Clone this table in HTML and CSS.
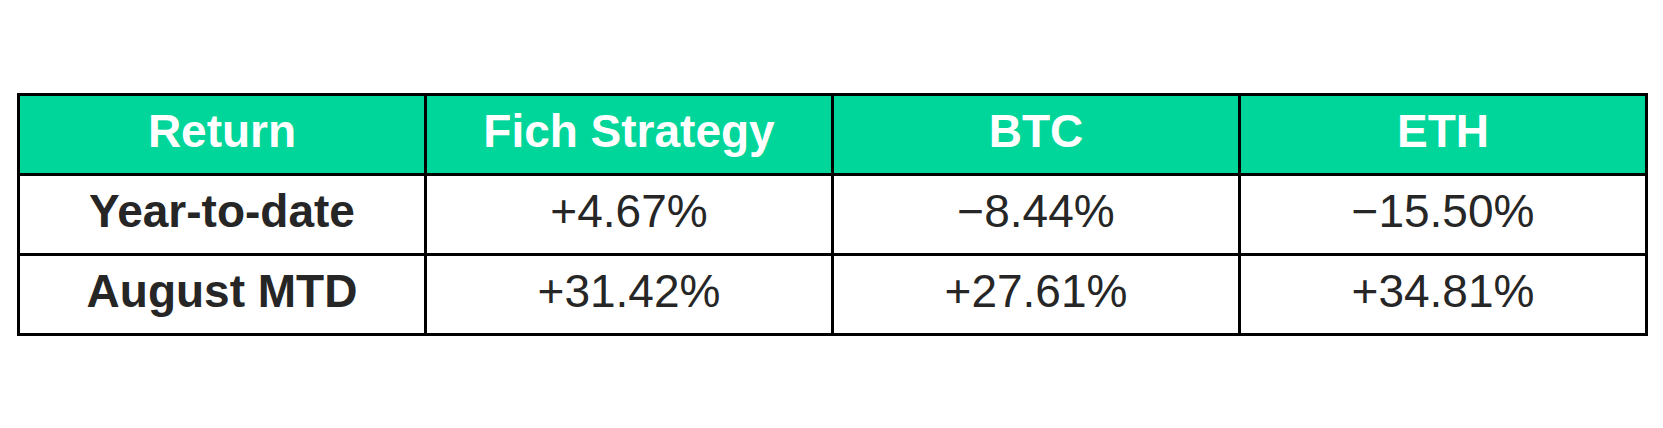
FILE: index.html
```html
<!DOCTYPE html>
<html lang="en">
<head>
<meta charset="utf-8">
<title>Returns</title>
<link rel="stylesheet" href="styles.css">
</head>
<body>
<div class="page">
  <table class="returns">
    <thead>
      <tr>
        <th>Return</th>
        <th>Fich Strategy</th>
        <th>BTC</th>
        <th>ETH</th>
      </tr>
    </thead>
    <tbody>
      <tr>
        <td class="label">Year-to-date</td>
        <td>+4.67%</td>
        <td>−8.44%</td>
        <td>−15.50%</td>
      </tr>
      <tr>
        <td class="label">August MTD</td>
        <td>+31.42%</td>
        <td>+27.61%</td>
        <td>+34.81%</td>
      </tr>
    </tbody>
  </table>
</div>
</body>
</html>
```
FILE: styles.css
```css
html, body {
  margin: 0;
  padding: 0;
  background: #ffffff;
}

.page {
  padding: 93px 0 0 17px;
}

.returns {
  border-collapse: collapse;
  table-layout: fixed;
  width: 1631px;
  font-family: "Liberation Sans", Arial, sans-serif;
  font-size: 46px;
  color: #262626;
}

.returns th,
.returns td {
  border: 3px solid #000000;
  height: 70px;
  padding: 0 0 7px 0;
  text-align: center;
  vertical-align: middle;
  line-height: 1.15;
}

.returns th {
  background: #00d69a;
  color: #ffffff;
  font-weight: bold;
}

.returns td {
  font-weight: normal;
}

.returns td.label {
  font-weight: bold;
}
```
